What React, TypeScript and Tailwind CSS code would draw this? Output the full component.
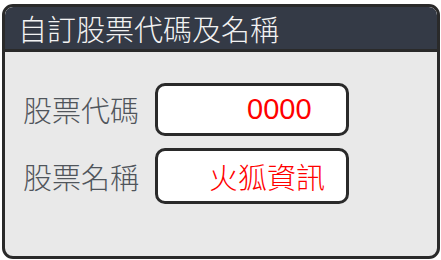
import React from "react";

const cjk = { fontFamily: '"Noto Sans CJK TC", "Noto Sans", sans-serif' };

export default function App() {
  return (
    <div className="w-[441px] h-[260px] bg-white pt-[4px] pl-[2px]">
      <div className="w-[438px] h-[255px] border-[3px] border-[#2a2a2a] rounded-[11px] bg-[#e9e9e9] overflow-hidden flex flex-col">
        <div
          className="h-[45px] shrink-0 bg-[#343a46] border-b-[3px] border-[#2a2a2a] rounded-t-[8px] flex items-center pl-[13px] text-[29px] font-light text-[#f2f2f2] leading-none"
          style={cjk}
        >
          自訂股票代碼及名稱
        </div>
        <div className="flex flex-col gap-[12px] pt-[31px] pl-[18px]">
          <div className="flex items-center gap-[15px]">
            <div className="w-[117px] text-[29px] font-light text-[#50555b] leading-none" style={cjk}>
              股票代碼
            </div>
            <div className="w-[194px] h-[53px] border-[3px] border-[#2a2a2a] rounded-[10px] bg-white flex items-center pl-[89px]">
              <span className="text-[29px] text-[#ff0000] leading-none" style={{ fontFamily: '"Liberation Sans", Arial, sans-serif' }}>
                0000
              </span>
            </div>
          </div>
          <div className="flex items-center gap-[15px]">
            <div className="w-[117px] text-[29px] font-light text-[#50555b] leading-none" style={cjk}>
              股票名稱
            </div>
            <div className="w-[194px] h-[56px] border-[3px] border-[#2a2a2a] rounded-[10px] bg-white flex items-center pl-[51px]">
              <span className="text-[29px] font-light text-[#ff0000] leading-none" style={cjk}>
                火狐資訊
              </span>
            </div>
          </div>
        </div>
      </div>
    </div>
  );
}
